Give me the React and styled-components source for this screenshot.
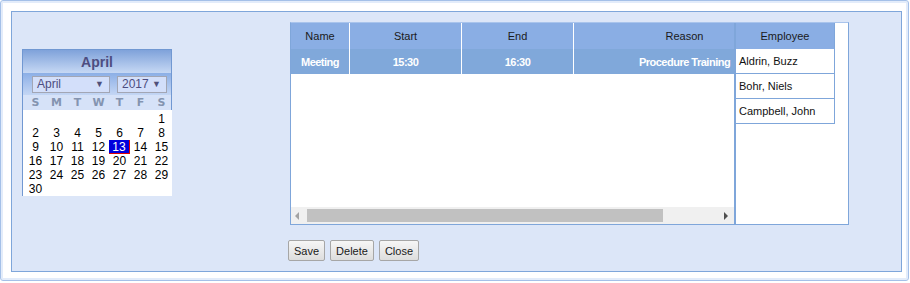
import React from "react";
import styled, { createGlobalStyle } from "styled-components";

const Global = createGlobalStyle`
  html, body { margin: 0; padding: 0; background: #ffffff; }
  body { font-family: "Liberation Sans", Arial, sans-serif; }
  * { box-sizing: border-box; }
`;

const Frame = styled.div`
  width: 909px;
  height: 281px;
  border: 1px solid #a4c0e8;
  border-radius: 3px;
  box-shadow: inset 0 0 0 2px #e3ecfa;
  background: #ffffff;
  padding: 10px;
`;

const Panel = styled.div`
  width: 891px;
  height: 261px;
  border: 1px solid #7fa6da;
  background: #dce6f8;
  padding: 10px 0 0 10px;
  display: flex;
  align-items: flex-start;
`;

const Calendar = styled.div`
  width: 150px;
  margin-top: 27px;
  border-left: 1px solid #7198d2;
  display: flex;
  flex-direction: column;
`;

const CalTitle = styled.div`
  height: 24px;
  border-top: 1px solid #7198d2;
  border-right: 1px solid #7198d2;
  background: linear-gradient(#7fa2da, #c6d8f4);
  color: #4d4d80;
  font: bold 14px "Liberation Sans", Arial, sans-serif;
  display: flex;
  align-items: center;
  justify-content: center;
  padding-top: 1px;
`;

const SelectRow = styled.div`
  height: 22px;
  border-right: 1px solid #7198d2;
  background: linear-gradient(#8cafe6, #c4d6f4);
  display: flex;
  align-items: center;
  padding-left: 9px;
  gap: 7px;
`;

const FakeSelect = styled.div`
  width: ${(p) => p.$w}px;
  height: 17px;
  border: 1px solid #a2a6b4;
  background: #d3dffa;
  color: #4d4d80;
  font: 12px "Liberation Sans", Arial, sans-serif;
  display: flex;
  align-items: center;
  justify-content: space-between;
  padding: 0 5px 0 4px;
`;

const Arrow = styled.span`
  font-size: 9px;
  color: #50507a;
`;

const DowRow = styled.div`
  height: 15px;
  border-right: 1px solid #7198d2;
  background: #d6e2f8;
  display: grid;
  grid-template-columns: repeat(7, 21px);
  padding-left: 2px;
  align-items: center;
`;

const Dow = styled.div`
  text-align: center;
  font: bold 11px "DejaVu Sans", "Liberation Sans", sans-serif;
  color: #8494b0;
`;

const Days = styled.div`
  background: #ffffff;
  display: grid;
  grid-template-columns: repeat(7, 21px);
  grid-auto-rows: 14px;
  padding: 2px 0 0 2px;
  height: 86px;
`;

const Day = styled.div`
  text-align: center;
  font: 12px "Liberation Sans", Arial, sans-serif;
  line-height: 14px;
  color: ${(p) => (p.$sel ? "#ffffff" : "#000000")};
  background: ${(p) => (p.$sel ? "#0000dd" : "transparent")};
  border-right: ${(p) => (p.$sel ? "1px solid #e00000" : "none")};
  border-bottom: ${(p) => (p.$sel ? "1px solid #e00000" : "none")};
`;

const Right = styled.div`
  margin-left: 118px;
  display: flex;
  flex-direction: column;
`;

const GridBox = styled.div`
  width: 559px;
  height: 203px;
  border: 1px solid #7fa6da;
  border-top-color: #a9c4ec;
  background: #ffffff;
  display: flex;
`;

const MainGrid = styled.div`
  width: 443px;
  display: flex;
  flex-direction: column;
  overflow: hidden;
`;

const Rows = styled.div`
  flex: 1;
  overflow: hidden;
`;

const Row = styled.div`
  display: flex;
  width: 505px;
  height: ${(p) => p.$h}px;
  background: ${(p) => (p.$head ? "#8aaee4" : "#80a8da")};
`;

const Cell = styled.div`
  width: ${(p) => p.$w}px;
  flex: none;
  border-right: 1px solid #ffffff;
  display: flex;
  align-items: center;
  justify-content: center;
  font-size: 11px;
  white-space: nowrap;
  font-family: "Liberation Sans", Arial, sans-serif;
  color: ${(p) => (p.$head ? "#1a1a1a" : "#ffffff")};
  font-weight: ${(p) => (p.$head ? "normal" : "bold")};
  letter-spacing: ${(p) => (p.$head ? "0" : "-0.5px")};
`;

const HScroll = styled.div`
  height: 17px;
  background: #f0f0f0;
  display: flex;
  align-items: center;
  padding: 0 4px;
`;

const Thumb = styled.div`
  height: 13px;
  width: 356px;
  background: #c1c1c1;
  margin-left: 8px;
`;

const Tri = styled.span`
  width: 0;
  height: 0;
  border-top: 4px solid transparent;
  border-bottom: 4px solid transparent;
  ${(p) =>
    p.$dir === "left"
      ? "border-right: 4px solid #a3a3a3;"
      : "border-left: 4px solid #505050; margin-left: auto; margin-right: 2px;"}
`;

const EmpArea = styled.div`
  flex: 1;
  border-left: 2px solid #7fa6da;
  display: flex;
  align-items: flex-start;
`;

const EmpTable = styled.div`
  width: 99px;
  border-right: 1px solid #7fa6da;
  display: flex;
  flex-direction: column;
`;

const EmpHead = styled.div`
  height: 26px;
  background: #8aaee4;
  display: flex;
  align-items: center;
  justify-content: center;
  font: 11px "Liberation Sans", Arial, sans-serif;
  color: #1a1a1a;
`;

const EmpRow = styled.div`
  height: 25px;
  border-bottom: 1px solid #7fa6da;
  display: flex;
  align-items: center;
  padding-left: 3px;
  font: 11px "Liberation Sans", Arial, sans-serif;
  color: #111111;
  white-space: nowrap;
`;

const Buttons = styled.div`
  display: flex;
  gap: 5px;
  margin-top: 15px;
  margin-left: -2px;
`;

const Button = styled.button`
  height: 21px;
  padding: 0 5px;
  border: 1px solid #a6a6a6;
  border-radius: 2px;
  background: linear-gradient(#f6f6f6, #dddddd);
  font: 11px "Liberation Sans", Arial, sans-serif;
  color: #1a1a1a;
`;

const dow = ["S", "M", "T", "W", "T", "F", "S"];
const days = [
  ...Array(6).fill(null),
  ...Array.from({ length: 30 }, (_, i) => i + 1),
];

const cols = [
  { key: "Name", w: 59, v: "Meeting" },
  { key: "Start", w: 112, v: "15:30" },
  { key: "End", w: 112, v: "16:30" },
  { key: "Reason", w: 222, v: "Procedure Training" },
];

const employees = ["Aldrin, Buzz", "Bohr, Niels", "Campbell, John"];

export default function App() {
  return (
    <>
      <Global />
      <Frame>
        <Panel>
          <Calendar>
            <CalTitle>April</CalTitle>
            <SelectRow>
              <FakeSelect $w={78}>
                <span>April</span>
                <Arrow>▼</Arrow>
              </FakeSelect>
              <FakeSelect $w={50}>
                <span>2017</span>
                <Arrow>▼</Arrow>
              </FakeSelect>
            </SelectRow>
            <DowRow>
              {dow.map((d, i) => (
                <Dow key={i}>{d}</Dow>
              ))}
            </DowRow>
            <Days>
              {days.map((d, i) => (
                <Day key={i} $sel={d === 13}>
                  {d ?? ""}
                </Day>
              ))}
            </Days>
          </Calendar>
          <Right>
            <GridBox>
              <MainGrid>
                <Rows>
                  <Row $head $h={26}>
                    {cols.map((c) => (
                      <Cell key={c.key} $head $w={c.w}>
                        {c.key}
                      </Cell>
                    ))}
                  </Row>
                  <Row $h={25}>
                    {cols.map((c) => (
                      <Cell key={c.key} $w={c.w}>
                        {c.v}
                      </Cell>
                    ))}
                  </Row>
                </Rows>
                <HScroll>
                  <Tri $dir="left" />
                  <Thumb />
                  <Tri $dir="right" />
                </HScroll>
              </MainGrid>
              <EmpArea>
                <EmpTable>
                  <EmpHead>Employee</EmpHead>
                  {employees.map((e) => (
                    <EmpRow key={e}>{e}</EmpRow>
                  ))}
                </EmpTable>
              </EmpArea>
            </GridBox>
            <Buttons>
              <Button>Save</Button>
              <Button>Delete</Button>
              <Button>Close</Button>
            </Buttons>
          </Right>
        </Panel>
      </Frame>
    </>
  );
}
